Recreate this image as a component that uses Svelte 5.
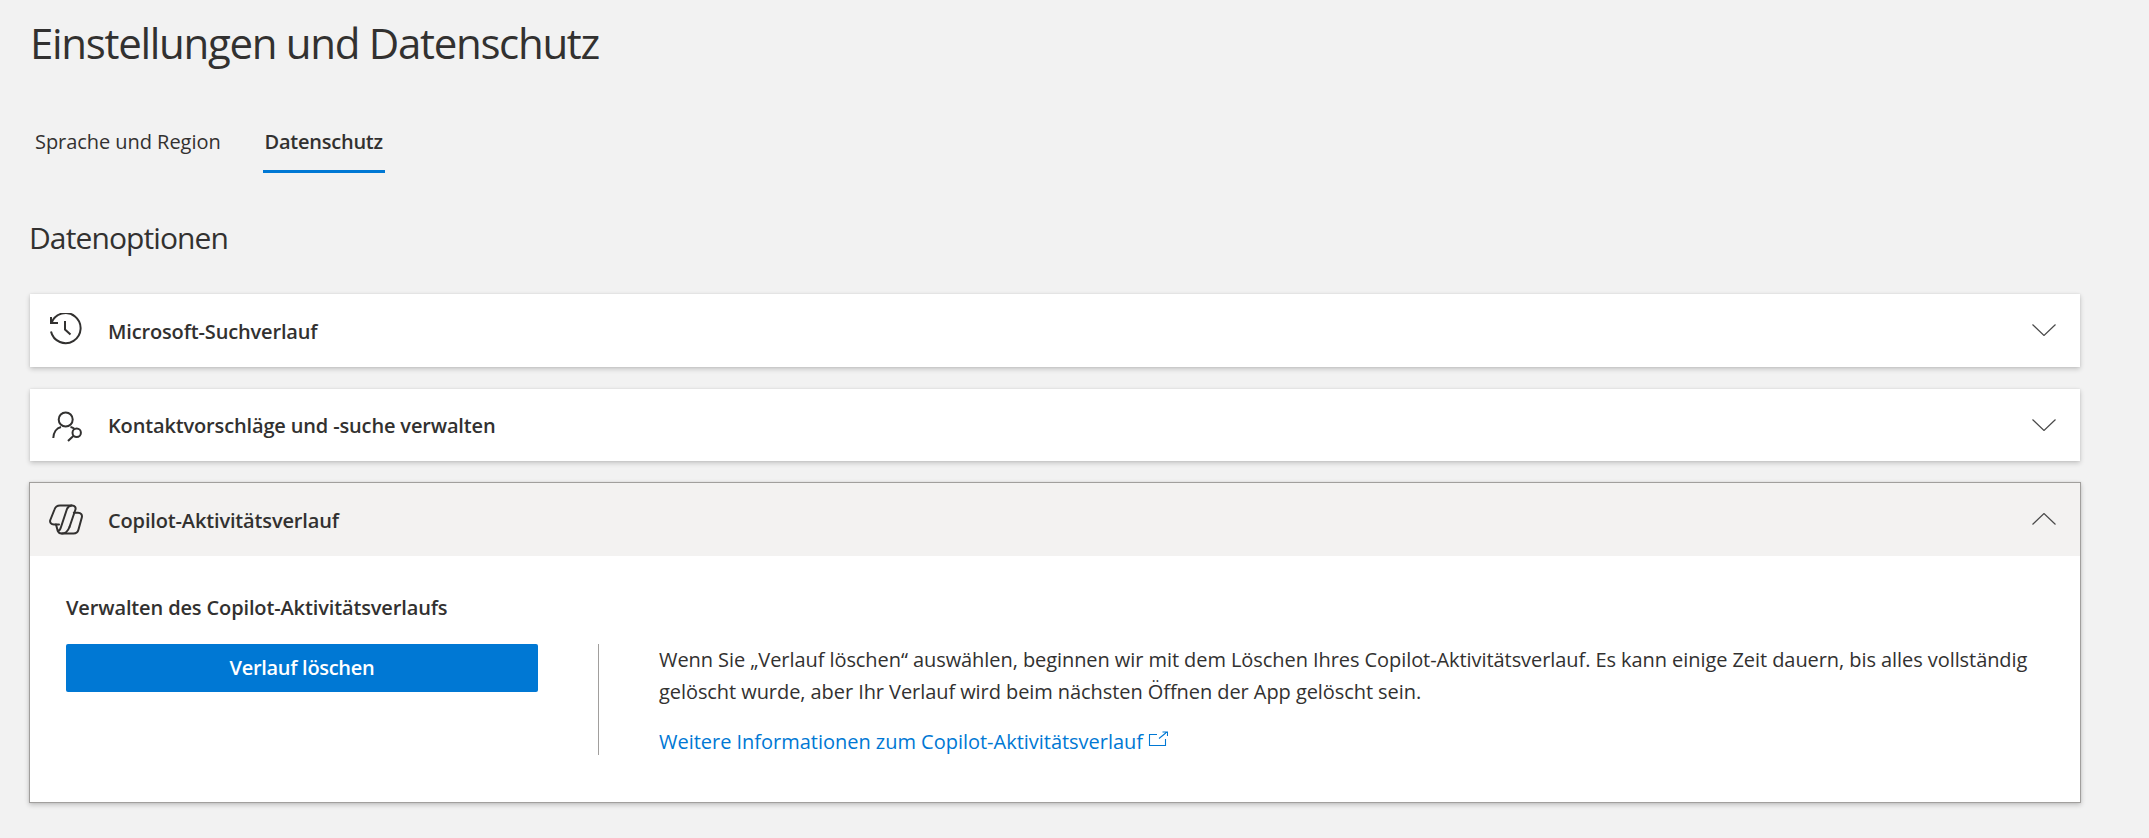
<script lang="ts">
  const chevDown = 'M0.500 0.500L12 11.500L23.500 0.500';
  const chevUp = 'M0.500 11.500L12 0.500L23.500 11.500';
</script>

<main class="page">
  <h1>Einstellungen und Datenschutz</h1>

  <nav class="tabs">
    <a class="tab" href="#region">Sprache und Region</a>
    <a class="tab active" href="#privacy">Datenschutz</a>
  </nav>

  <h2>Datenoptionen</h2>

  <section class="card">
    <div class="head">
      <svg class="icon" viewBox="0 0 34 34" fill="none" stroke="#323130" stroke-width="2">
        <path d="M2 4v6h7" />
        <path d="M2.500 10A15 15 0 1 1 2 18.500" />
        <path d="M16 8v8.500l5.500 5" />
      </svg>
      <span class="label">Microsoft-Suchverlauf</span>
      <svg class="chev" viewBox="0 0 24 12" fill="none" stroke="#4a4a4a" stroke-width="1.2"><path d={chevDown} /></svg>
    </div>
  </section>

  <section class="card">
    <div class="head">
      <svg class="icon" viewBox="0 0 34 34" fill="none" stroke="#323130" stroke-width="2">
        <circle cx="16.700" cy="11.500" r="7" />
        <path d="M4.300 30C4.500 24.500 7.500 20 12 19M21.500 19C23 19.300 24.300 20 25.300 20.800" />
        <circle cx="27.700" cy="24.800" r="4.200" />
        <path d="M24.600 27.800L19 33" />
      </svg>
      <span class="label">Kontaktvorschläge und -suche verwalten</span>
      <svg class="chev" viewBox="0 0 24 12" fill="none" stroke="#4a4a4a" stroke-width="1.2"><path d={chevDown} /></svg>
    </div>
  </section>

  <section class="card open">
    <div class="head">
      <svg class="icon" viewBox="0 0 34 34" fill="none" stroke="#323130" stroke-width="2" stroke-linejoin="round" stroke-linecap="round">
        <path d="M10 22.500H5C2 22.500 0.500 20.500 1.300 18L5.500 7.500C6.300 5 8.500 3.500 11 3.500H23C26 3.500 27.200 5.500 26.300 8L20.500 25" />
        <path d="M24.800 10.800H29C32 10.800 33.500 13 32.800 15.500L29.500 27.500C28.900 30 27 31.500 24.500 31.500H12.500C10.500 31.500 9 30 8.500 28L7 22.500" />
        <path d="M22.500 3.500C20 3.800 18.500 5.500 17.800 7.500L12 25C11.300 27.500 10.500 29 8.800 28.800" />
        <path d="M20.500 25C19 29 17 31.500 13 31.500" />
      </svg>
      <span class="label">Copilot-Aktivitätsverlauf</span>
      <svg class="chev" viewBox="0 0 24 12" fill="none" stroke="#4a4a4a" stroke-width="1.2"><path d={chevUp} /></svg>
    </div>

    <div class="body">
      <div class="left">
        <h3>Verwalten des Copilot-Aktivitätsverlaufs</h3>
        <button type="button">Verlauf löschen</button>
      </div>
      <div class="right">
        <p>Wenn Sie „Verlauf löschen“ auswählen, beginnen wir mit dem Löschen Ihres Copilot-Aktivitätsverlauf. Es kann einige Zeit dauern, bis alles vollständig<br />gelöscht wurde, aber Ihr Verlauf wird beim nächsten Öffnen der App gelöscht sein.</p>
        <a class="more" href="#more">Weitere Informationen zum Copilot-Aktivitätsverlauf<svg viewBox="0 0 20 16" fill="none" stroke="#0078d4" stroke-width="1.100"><path d="M9 3.500H1.500V14.500H17.500V8" /><path d="M11 7.500L19 1M14.500 1H19.500V5" /></svg></a>
      </div>
    </div>
  </section>
</main>

<style>
  :global(body) {
    margin: 0;
    background: #f2f2f2;
    color: #323130;
    font-family: "Open Sans", "Noto Sans", sans-serif;
  }

  .page {
    width: 2050px;
    padding: 16px 69px 0 30px;
    height: 822px;
    overflow: hidden;
  }

  h1 {
    margin: 0;
    font-size: 42px;
    line-height: 54px;
    font-weight: 400;
    letter-spacing: -1.3px;
  }

  .tabs {
    display: flex;
    gap: 40px;
    height: 55px;
    margin-top: 48px;
    padding-left: 3px;
  }

  .tab {
    display: block;
    padding: 0 2px;
    line-height: 48px;
    font-size: 20px;
    color: #323130;
    text-decoration: none;
    box-sizing: border-box;
    height: 55px;
    letter-spacing: -0.05px;
  }

  .tab.active {
    font-weight: 600;
    letter-spacing: -0.25px;
    border-bottom: 3px solid #0078d4;
  }

  h2 {
    margin: 47px 0 0 -1px;
    font-size: 30px;
    line-height: 36px;
    font-weight: 400;
    letter-spacing: -0.9px;
  }

  .card {
    background: #fff;
    box-shadow: 0 2px 5px rgba(0, 0, 0, 0.2), 0 0 2px rgba(0, 0, 0, 0.08);
    margin-bottom: 22px;
  }

  h2 + .card {
    margin-top: 38px;
  }

  .head {
    display: flex;
    align-items: center;
    height: 72.500px;
    padding: 0 24px 0 19px;
  }

  .icon {
    width: 34px;
    height: 34px;
    margin-right: 25px;
    flex: none;
  }

  .label {
    flex: 1;
    padding-top: 2px;
    font-size: 20px;
    font-weight: 600;
    letter-spacing: -0.15px;
  }

  .chev {
    width: 24px;
    height: 12px;
    flex: none;
  }

  .open {
    border: 1px solid #a19f9d;
    margin: -1px 0 0 -1px;
    width: 2050px;
  }

  .open .head {
    background: #f3f2f1;
  }

  .body {
    display: flex;
    height: 246.500px;
    box-sizing: border-box;
    padding: 38px 0 0 36px;
  }

  .left {
    width: 472px;
  }

  h3 {
    margin: 0;
    font-size: 20px;
    line-height: 28px;
    font-weight: 600;
    letter-spacing: -0.13px;
  }

  button {
    display: block;
    width: 472px;
    height: 48px;
    margin-top: 22px;
    border: 0;
    border-radius: 2px;
    background: #0078d4;
    color: #fff;
    font: 600 20px "Open Sans", sans-serif;
    letter-spacing: -0.3px;
    padding: 0;
  }

  .right {
    margin: 50px 0 0 60px;
    padding-left: 60px;
    border-left: 1px solid #a19f9d;
    height: 111px;
  }

  p {
    margin: 0;
    font-size: 20px;
    line-height: 32px;
    letter-spacing: -0.07px;
    white-space: nowrap;
  }

  .more {
    display: inline-block;
    margin-top: 18px;
    font-size: 20px;
    line-height: 32px;
    color: #0078d4;
    text-decoration: none;
    letter-spacing: -0.02px;
  }

  .more svg {
    width: 20px;
    height: 16px;
    margin-left: 5px;
    vertical-align: 2px;
  }
</style>
